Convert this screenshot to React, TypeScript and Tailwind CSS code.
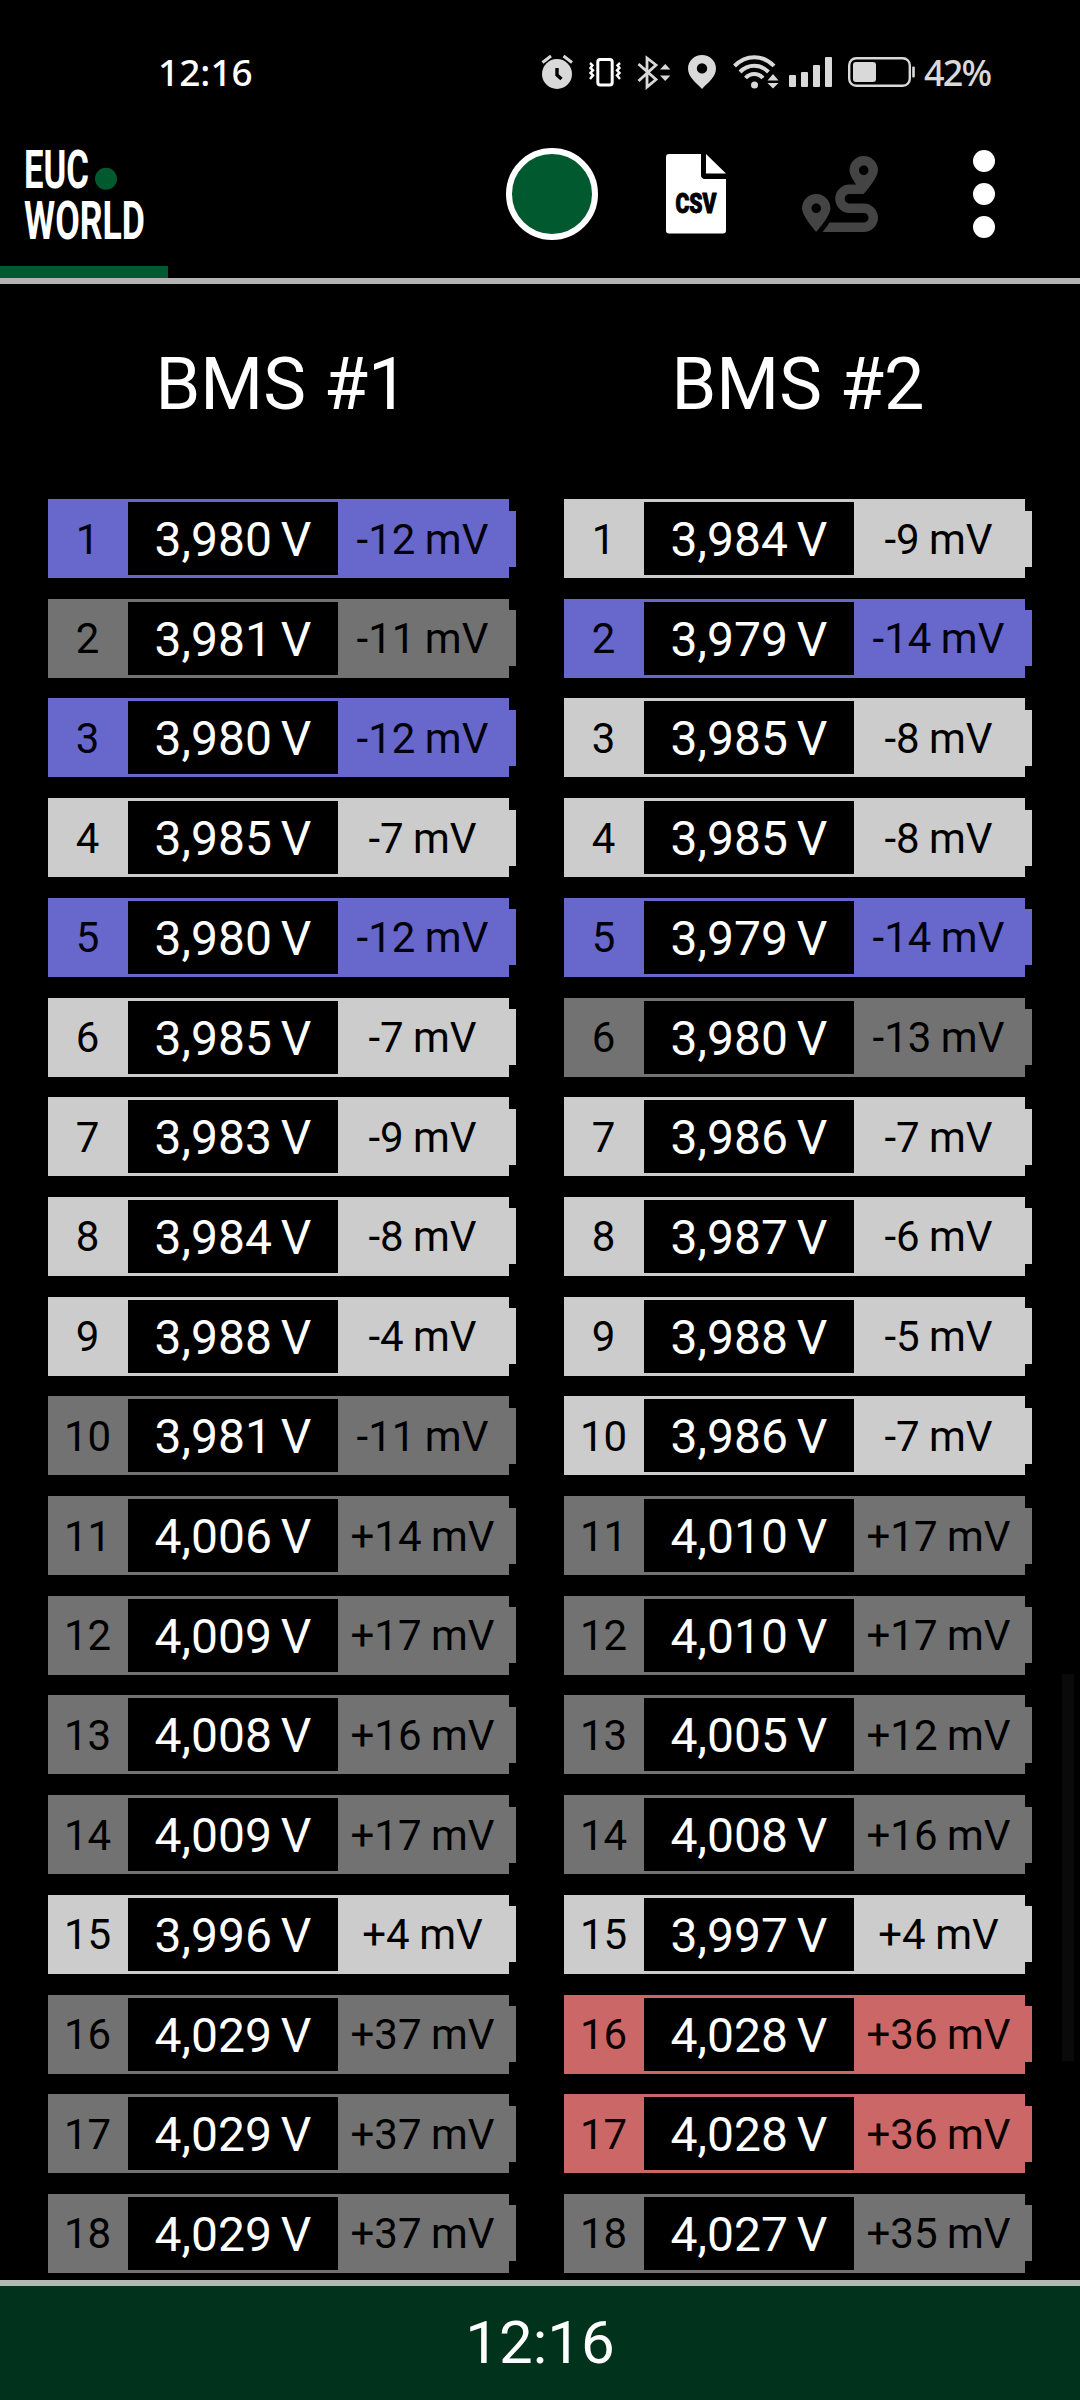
import { FaRoute } from 'react-icons/fa';
import clsx from 'clsx';

type Tone = 'low' | 'high' | 'normal' | 'dim';

interface Cell {
  voltage: string;
  delta: string;
  tone: Tone;
}

const tones: Record<Tone, string> = {
  low: 'bg-[#6867cc] text-[#02020c]',
  high: 'bg-[#cc6767] text-[#0c0202]',
  normal: 'bg-[#cccccc] text-black',
  dim: 'bg-[#727272] text-black',
};

const cell = (voltage: string, delta: string, tone: Tone): Cell => ({ voltage, delta, tone });

const packs: { name: string; cells: Cell[] }[] = [
  {
    name: 'BMS #1',
    cells: [
      cell('3,980', '-12', 'low'),
      cell('3,981', '-11', 'dim'),
      cell('3,980', '-12', 'low'),
      cell('3,985', '-7', 'normal'),
      cell('3,980', '-12', 'low'),
      cell('3,985', '-7', 'normal'),
      cell('3,983', '-9', 'normal'),
      cell('3,984', '-8', 'normal'),
      cell('3,988', '-4', 'normal'),
      cell('3,981', '-11', 'dim'),
      cell('4,006', '+14', 'dim'),
      cell('4,009', '+17', 'dim'),
      cell('4,008', '+16', 'dim'),
      cell('4,009', '+17', 'dim'),
      cell('3,996', '+4', 'normal'),
      cell('4,029', '+37', 'dim'),
      cell('4,029', '+37', 'dim'),
      cell('4,029', '+37', 'dim'),
    ],
  },
  {
    name: 'BMS #2',
    cells: [
      cell('3,984', '-9', 'normal'),
      cell('3,979', '-14', 'low'),
      cell('3,985', '-8', 'normal'),
      cell('3,985', '-8', 'normal'),
      cell('3,979', '-14', 'low'),
      cell('3,980', '-13', 'dim'),
      cell('3,986', '-7', 'normal'),
      cell('3,987', '-6', 'normal'),
      cell('3,988', '-5', 'normal'),
      cell('3,986', '-7', 'normal'),
      cell('4,010', '+17', 'dim'),
      cell('4,010', '+17', 'dim'),
      cell('4,005', '+12', 'dim'),
      cell('4,008', '+16', 'dim'),
      cell('3,997', '+4', 'normal'),
      cell('4,028', '+36', 'high'),
      cell('4,028', '+36', 'high'),
      cell('4,027', '+35', 'dim'),
    ],
  },
];

function StatusIcons() {
  return (
    <div className="flex h-[36px] items-start text-[#d9d9d9]">
      {/* alarm */}
      <svg className="h-[36px] w-[32px]" viewBox="0 0 32 36" fill="currentColor">
        <circle cx="16" cy="20" r="15" />
        <path d="M1.5 8.5 10 2M22.5 2 31 8.5" stroke="currentColor" strokeWidth="3" />
        <path d="M16 14v7l4.5 4" stroke="#000" strokeWidth="3.4" fill="none" />
      </svg>
      {/* vibrate */}
      <svg className="ml-[16px] h-[36px] w-[32px]" viewBox="0 0 32 36" fill="none" stroke="#fff">
        <rect x="8.8" y="5.5" width="14.4" height="25.5" rx="2.5" strokeWidth="3" />
        <path d="M1 9l2.5 2.3L1.5 14l2.5 2.3L1.5 19l2.5 2.3L1 25M31 9l-2.5 2.3 2 2.7-2.5 2.3 2.5 2.7-2.5 2.3 3 3.7" strokeWidth="2.4" />
      </svg>
      {/* bluetooth */}
      <svg className="ml-[16px] h-[36px] w-[34px]" viewBox="0 0 34 36" fill="currentColor">
        <path d="M1.5 10 19 25.5 10 33V4l9 7L1.5 27" fill="none" stroke="currentColor" strokeWidth="2.8" />
        <path d="M23 15.5 28.2 10l5.2 5.5zM23 21.5h10.4L28.2 27z" />
      </svg>
      {/* location */}
      <svg className="ml-[16px] h-[36px] w-[30px]" viewBox="0 0 30 36" fill="currentColor">
        <path fillRule="evenodd" d="M15 1C7.2 1 1 7 1 14.5 1 23 9 28.5 15 35c6-6.5 14-12 14-20.5C29 7 22.8 1 15 1zm0 8.2a5.2 5.2 0 1 1 0 10.4 5.2 5.2 0 0 1 0-10.4z" />
      </svg>
      {/* wifi */}
      <svg className="ml-[16px] h-[36px] w-[46px]" viewBox="0 0 46 36" fill="currentColor">
        <g fill="none" stroke="currentColor" strokeWidth="4">
          <path d="M1.5 12C13 .3 30 .3 41 12" />
          <path d="M7 18c8-8.3 20.5-8.3 28.5 0" />
          <path d="M12.5 24c5-5.3 12.5-5.3 17.5 0" />
        </g>
        <circle cx="21.5" cy="31" r="3.5" />
        <path d="M34.5 26.5 40 20l5.5 6.5zM34.5 29h11L40 34.5z" />
      </svg>
      {/* mobile signal */}
      <svg className="ml-[10px] h-[36px] w-[44px]" viewBox="0 0 44 36" fill="currentColor">
        <rect x="0" y="21" width="7" height="12" rx="1" />
        <rect x="12" y="18" width="7" height="15" rx="1" />
        <rect x="24" y="11" width="7" height="22" rx="1" />
        <rect x="36" y="3" width="7" height="30" rx="1" />
      </svg>
      {/* battery */}
      <svg className="ml-[15px] h-[36px] w-[68px]" viewBox="0 0 68 36" fill="currentColor">
        <rect x="1.2" y="4.2" width="60.6" height="27.6" rx="7" fill="none" stroke="currentColor" strokeWidth="2.4" />
        <rect x="5" y="8" width="23" height="20" rx="3" />
        <rect x="64.2" y="12.5" width="2.6" height="11" rx="1" />
      </svg>
    </div>
  );
}

function StatusBar() {
  return (
    <div className="flex h-[144px] items-start pt-[54px] pl-[158px]">
      <div className="w-[383px] font-['Noto_Sans'] text-[37px] leading-[36px] font-medium">12:16</div>
      <StatusIcons />
      <div className="ml-[8px] font-['Noto_Sans'] text-[36px] leading-[38px] font-medium tracking-[-1.8px] text-[#d9d9d9]">42%</div>
    </div>
  );
}

function Logo() {
  return (
    <svg className="h-[100px] w-[130px] overflow-visible" viewBox="20 144 130 100" fill="#fff">
      <g fontFamily="Roboto" fontWeight="700" fontSize="54.5">
        <text x="24" y="187.5" textLength="65" lengthAdjust="spacingAndGlyphs">EUC</text>
        <text x="24" y="238.5" textLength="121" lengthAdjust="spacingAndGlyphs">WORLD</text>
      </g>
      <circle cx="106" cy="178.7" r="11" fill="#00592f" />
    </svg>
  );
}

function CsvIcon() {
  return (
    <svg className="h-[80px] w-[60px]" viewBox="0 0 60 80" fill="#fff">
      <path d="M3 0h32v21q0 4 4 4h21v51.5q0 3-3 3H3q-3 0-3-3V3q0-3 3-3z" />
      <path d="M40 0 60 19.5H40z" />
      <text
        x="9.5"
        y="59"
        textLength="41"
        lengthAdjust="spacingAndGlyphs"
        fontFamily="Roboto"
        fontWeight="900"
        fontSize="27"
        fill="#000"
        stroke="#000"
        strokeWidth="1"
        strokeLinejoin="round"
      >
        CSV
      </text>
    </svg>
  );
}

function Toolbar() {
  return (
    <div className="flex h-[122px] items-start pl-[20px]">
      <Logo />
      <div className="mt-[4px] ml-[356px] size-[92px] rounded-full border-6 border-white bg-[#00592f]" />
      <div className="mt-[10px] ml-[68px]">
        <CsvIcon />
      </div>
      <FaRoute className="mt-[12px] ml-[76px] size-[76px] text-[#444444]" />
      <div className="mt-[6px] ml-[95px] flex flex-col gap-[11px]">
        <span className="size-[22px] rounded-full bg-white" />
        <span className="size-[22px] rounded-full bg-white" />
        <span className="size-[22px] rounded-full bg-white" />
      </div>
    </div>
  );
}

function CellRow({ index, data }: { index: number; data: Cell }) {
  return (
    <div className="flex h-[79px] w-[468px] items-center">
      <div className={clsx('flex h-full w-[461px] items-center text-center text-[42px] leading-none', tones[data.tone])}>
        <div className="w-[79px] pt-[2px]">{index}</div>
        <div className="ml-px flex h-[73px] w-[210px] items-center justify-center bg-black pt-[3px] text-[48px] [word-spacing:-3px] text-white">
          {data.voltage} V
        </div>
        <div className="w-[169px] pt-[2px] [word-spacing:-1px] whitespace-nowrap">{data.delta} mV</div>
      </div>
      <div className={clsx('h-[56px] w-[7px]', tones[data.tone])} />
    </div>
  );
}

export default function App() {
  return (
    <div className="relative flex h-[2400px] w-[1080px] flex-col overflow-hidden bg-black font-['Roboto',sans-serif] text-white">
      <StatusBar />
      <Toolbar />
      <div className="h-[12px] w-[168px] bg-[#00592f]" />
      <div className="h-[6px] bg-[#b4b4b4]" />

      <div className="flex h-[1996px] gap-[48px] overflow-hidden pl-[48px]">
        {packs.map((pack) => (
          <div key={pack.name} className="w-[468px]">
            <h2 className="flex h-[215px] items-center justify-center pb-[13px] text-[72px] leading-none">{pack.name}</h2>
            <div className="flex flex-col gap-[20.71px]">
              {pack.cells.map((c, i) => (
                <CellRow key={i} index={i + 1} data={c} />
              ))}
            </div>
          </div>
        ))}
      </div>

      {/* scrollbar thumb floats over the list */}
      <div className="absolute top-[1674px] right-[6px] h-[387px] w-[12px] bg-[#0a0a0a]" />

      <div className="h-[6px] bg-[#b0b8b4]" />
      <div className="flex h-[114px] items-center justify-center bg-[#00321c] text-[60px] leading-none">12:16</div>
    </div>
  );
}
